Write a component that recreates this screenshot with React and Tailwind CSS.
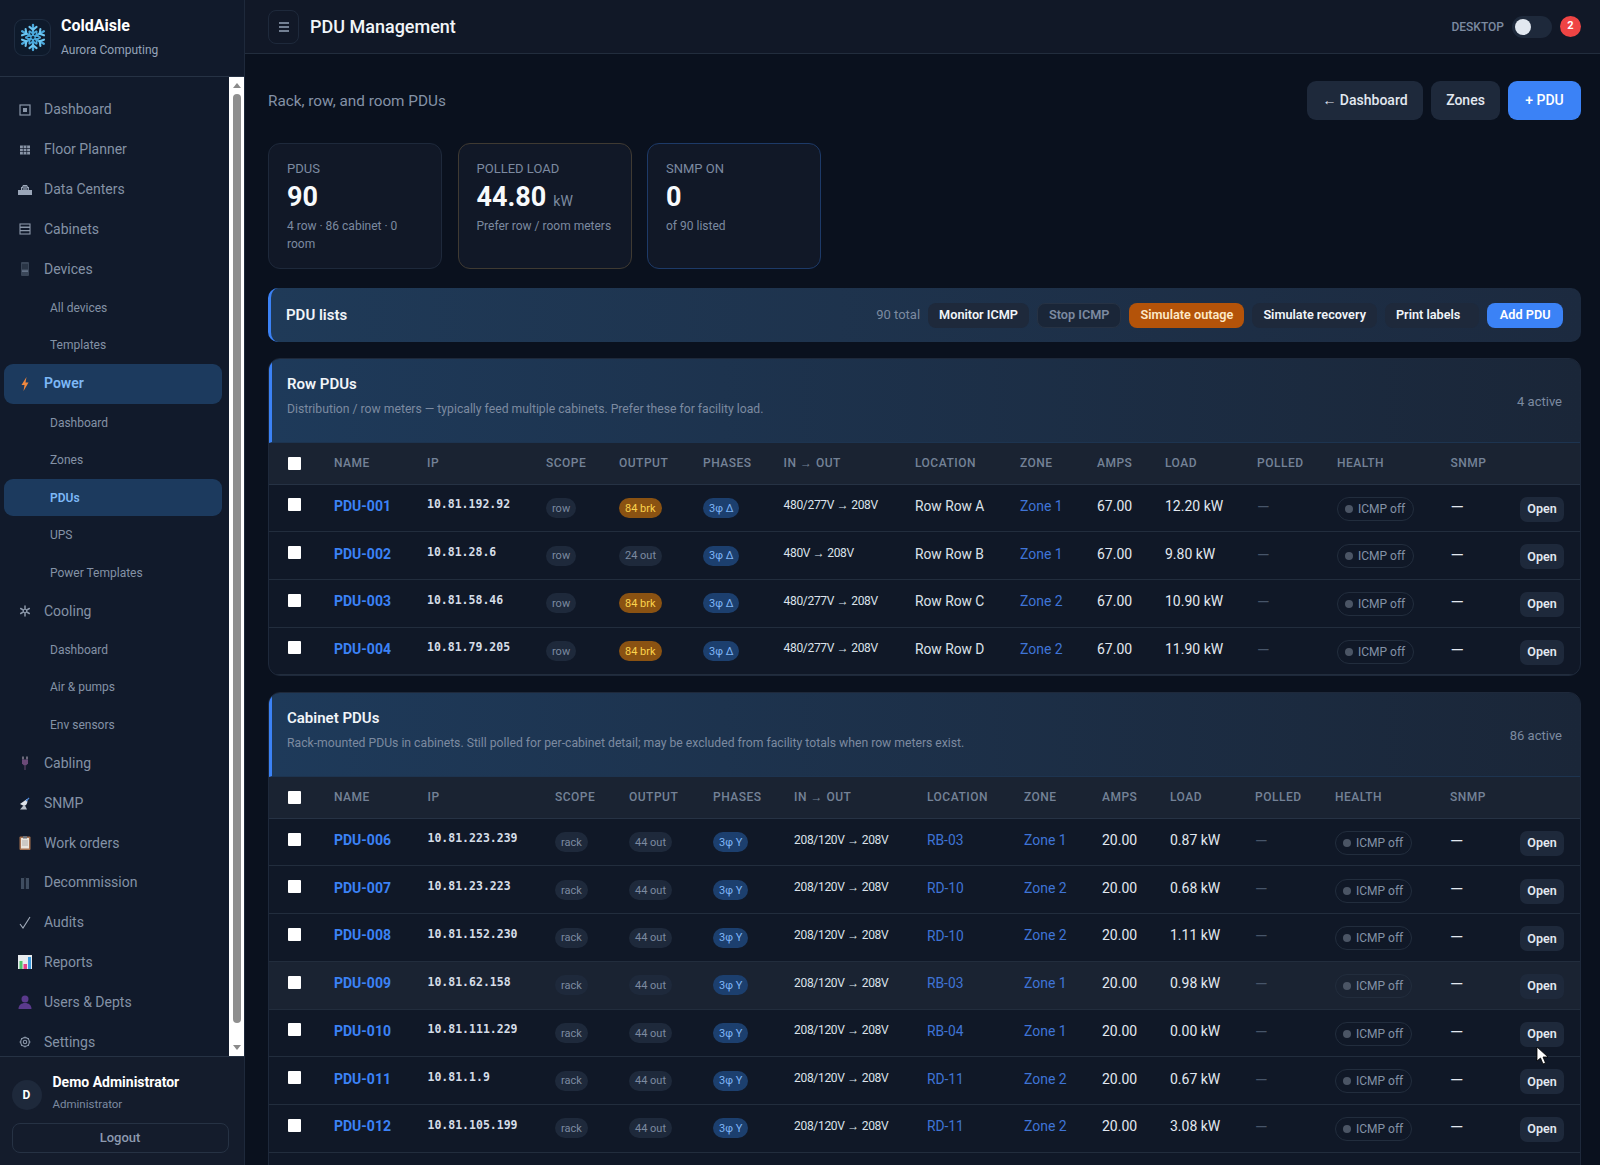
import React from 'react';

const NAV = [
  { label: 'Dashboard', icon: 'dash' },
  { label: 'Floor Planner', icon: 'floor' },
  { label: 'Data Centers', icon: 'dc' },
  { label: 'Cabinets', icon: 'cab' },
  { label: 'Devices', icon: 'dev' },
  { label: 'All devices', sub: true },
  { label: 'Templates', sub: true },
  { label: 'Power', icon: 'power', active: true },
  { label: 'Dashboard', sub: true },
  { label: 'Zones', sub: true },
  { label: 'PDUs', sub: true, active: true },
  { label: 'UPS', sub: true },
  { label: 'Power Templates', sub: true },
  { label: 'Cooling', icon: 'cool' },
  { label: 'Dashboard', sub: true },
  { label: 'Air & pumps', sub: true },
  { label: 'Env sensors', sub: true },
  { label: 'Cabling', icon: 'cabling' },
  { label: 'SNMP', icon: 'snmp' },
  { label: 'Work orders', icon: 'work' },
  { label: 'Decommission', icon: 'decom' },
  { label: 'Audits', icon: 'audit' },
  { label: 'Reports', icon: 'reports' },
  { label: 'Users & Depts', icon: 'users' },
  { label: 'Settings', icon: 'settings' },
];

const HEADERS = ['Name', 'IP', 'Scope', 'Output', 'Phases', 'In → Out', 'Location', 'Zone', 'Amps', 'Load', 'Polled', 'Health', 'SNMP', ''];

const ROW_COLS = ['w-[49px]', 'w-[93px]', 'w-[119px]', 'w-[73px]', 'w-[84px]', 'w-[80.5px]', 'w-[131.5px]', 'w-[105px]', 'w-[77px]', 'w-[68px]', 'w-[92px]', 'w-[80px]', 'w-[113.5px]', 'w-[70px]', 'w-[75.5px]'];
const CAB_COLS = ['w-[49px]', 'w-[93.5px]', 'w-[127.5px]', 'w-[74px]', 'w-[84px]', 'w-[81px]', 'w-[133px]', 'w-[97px]', 'w-[78px]', 'w-[68px]', 'w-[85px]', 'w-[80px]', 'w-[115px]', 'w-[70.5px]', 'w-[75.5px]'];

const ROW_PDUS = [
  { name: 'PDU-001', ip: '10.81.192.92', output: '84 brk', io: '480/277V → 208V', loc: 'Row Row A', zone: 'Zone 1', amps: '67.00', load: '12.20 kW' },
  { name: 'PDU-002', ip: '10.81.28.6', output: '24 out', io: '480V → 208V', loc: 'Row Row B', zone: 'Zone 1', amps: '67.00', load: '9.80 kW' },
  { name: 'PDU-003', ip: '10.81.58.46', output: '84 brk', io: '480/277V → 208V', loc: 'Row Row C', zone: 'Zone 2', amps: '67.00', load: '10.90 kW' },
  { name: 'PDU-004', ip: '10.81.79.205', output: '84 brk', io: '480/277V → 208V', loc: 'Row Row D', zone: 'Zone 2', amps: '67.00', load: '11.90 kW' },
];

const CAB_PDUS = [
  { name: 'PDU-006', ip: '10.81.223.239', loc: 'RB-03', zone: 'Zone 1', load: '0.87 kW' },
  { name: 'PDU-007', ip: '10.81.23.223', loc: 'RD-10', zone: 'Zone 2', load: '0.68 kW' },
  { name: 'PDU-008', ip: '10.81.152.230', loc: 'RD-10', zone: 'Zone 2', load: '1.11 kW' },
  { name: 'PDU-009', ip: '10.81.62.158', loc: 'RB-03', zone: 'Zone 1', load: '0.98 kW', hover: true },
  { name: 'PDU-010', ip: '10.81.111.229', loc: 'RB-04', zone: 'Zone 1', load: '0.00 kW' },
  { name: 'PDU-011', ip: '10.81.1.9', loc: 'RD-11', zone: 'Zone 2', load: '0.67 kW' },
  { name: 'PDU-012', ip: '10.81.105.199', loc: 'RD-11', zone: 'Zone 2', load: '3.08 kW' },
  { name: 'PDU-013', ip: '10.81.44.120', loc: 'RD-12', zone: 'Zone 2', load: '1.42 kW' },
];

// windows-style emoji and glyphs from the nav, redrawn small
const NavIcon = ({ name }) => {
  const c = '#8a96a8';
  switch (name) {
    case 'dash':
      return <svg width="16" height="16" viewBox="0 0 16 16"><rect x="3" y="3" width="10" height="10" fill="none" stroke={c} strokeWidth="1.2" /><rect x="6" y="6" width="4" height="4" fill={c} /></svg>;
    case 'floor':
      return <svg width="16" height="16" viewBox="0 0 16 16"><rect x="3" y="3.5" width="10" height="9" fill={c} /><path d="M3 6.5h10M3 9.5h10M6.3 3.5v9M9.7 3.5v9" stroke="#111a2b" strokeWidth=".7" /></svg>;
    case 'dc':
      return <svg width="16" height="16" viewBox="0 0 16 16"><path d="M1 9h3V6h1l1-2h4l1 2h1v3h3v5H1z" fill="#9aa6b8" /><path d="M7 5v4M9 5v4M5.5 7v2M10.6 7v2" stroke="#111a2b" strokeWidth=".7" /></svg>;
    case 'cab':
      return <svg width="16" height="16" viewBox="0 0 16 16"><rect x="3" y="3" width="10" height="10" fill="none" stroke={c} strokeWidth="1.1" /><path d="M3 6.3h10M3 9.6h10" stroke={c} strokeWidth="1.4" /></svg>;
    case 'dev':
      return <svg width="16" height="16" viewBox="0 0 16 16"><rect x="4" y="1" width="8" height="14" rx="1" fill="#3a4658" /><rect x="5" y="9.5" width="6" height="1.2" fill="#76849a" /><rect x="5" y="3" width="6" height="5" fill="#2a3546" /></svg>;
    case 'power':
      return <svg width="16" height="16" viewBox="0 0 16 16"><path d="M9.5 1 4.5 9h3l-1 6 5-8.500h-3z" fill="#f0883e" /></svg>;
    case 'cool':
      return <svg width="16" height="16" viewBox="0 0 16 16" stroke="#8a96a8" strokeWidth="1.5" strokeLinecap="round" fill="none"><path d="M8 3v3M8 10v3M3.700 5.500l2.500 1.500M9.800 9l2.500 1.500M3.700 10.500l2.500-1.500M9.800 7l2.500-1.500" /><circle cx="8" cy="8" r="1.700" strokeWidth="1.100" /></svg>;
    case 'cabling':
      return <svg width="16" height="16" viewBox="0 0 16 16"><path d="M6 1.500v3M10 1.500v3" stroke="#a89fb0" strokeWidth="1.2" /><path d="M5 4.500h6v4l-2 2H7l-2-2z" fill="#6b4a78" /><path d="M8 10.500V15" stroke="#4a3a58" strokeWidth="1.500" /></svg>;
    case 'snmp':
      return <svg width="16" height="16" viewBox="0 0 16 16"><path d="M3 9l7-5c1 3 0 6-3 7z" fill="#dfe4ea" /><path d="M6 11l-3 3.500h7L8 10.500z" fill="#b9c0ca" /><path d="M9 6l3-3" stroke="#4a86d8" strokeWidth="1.300" /></svg>;
    case 'work':
      return <svg width="16" height="16" viewBox="0 0 16 16"><rect x="2.500" y="1.500" width="11" height="13.500" rx="1" fill="#a5714f" /><rect x="4" y="3" width="8" height="10.500" fill="#e9e4dc" /><rect x="6" y="1" width="4" height="2.500" fill="#6a6f78" /><path d="M5 6h6M5 8h6M5 10h6" stroke="#9a9a9a" strokeWidth=".7" /></svg>;
    case 'decom':
      return <svg width="16" height="16" viewBox="0 0 16 16"><rect x="4" y="3" width="3" height="11" fill="#3f4d60" /><rect x="9" y="3" width="3" height="11" fill="#3f4d60" /><path d="M8 2v12" stroke="#26303f" strokeWidth=".8" /></svg>;
    case 'audit':
      return <svg width="16" height="16" viewBox="0 0 16 16"><path d="M3 9l3 4 7-11" fill="none" stroke="#a3adbc" strokeWidth="1.100" /></svg>;
    case 'reports':
      return <svg width="16" height="16" viewBox="0 0 16 16"><rect x="1" y="1" width="14" height="14" fill="#e8ecef" /><rect x="2.500" y="7" width="3" height="8" fill="#4fc36b" /><rect x="6.500" y="10" width="3.500" height="5" fill="#e83e8c" /><rect x="11" y="3" width="3" height="12" fill="#3d9be0" /></svg>;
    case 'users':
      return <svg width="16" height="16" viewBox="0 0 16 16"><circle cx="8" cy="5" r="3.500" fill="#5a3a8c" /><path d="M1.500 15c0-4 3-6 6.500-6s6.500 2 6.500 6z" fill="#5a3a8c" /></svg>;
    case 'settings':
      return <svg width="16" height="16" viewBox="0 0 16 16" fill="none" stroke={c}><circle cx="8" cy="8" r="1.700" strokeWidth="1.100" /><circle cx="8" cy="8" r="4.300" strokeWidth="1.200" /><path d="M8 2.500v1.500M8 12v1.500M2.500 8H4M12 8h1.500M4 4l1 1M11 11l1 1M4 12l1-1M11 5l1-1" strokeWidth="1" /></svg>;
    default:
      return null;
  }
};

const Snowflake = () => (
  <svg width="26" height="29" viewBox="0 0 27 30" fill="none" stroke="#4aa8dc" strokeLinecap="round">
    {[0, 60, 120, 180, 240, 300].map((a) => (
      <g key={a} transform={`rotate(${a} 13.5 15)`}>
        <path d="M13.500 12 V2" strokeWidth="2.400" />
        <path d="M13.500 7 L9.800 4 M13.500 7 L17.200 4" strokeWidth="2.200" stroke="#6cc6f2" />
        <path d="M13.500 11 L10 8.500 M13.500 11 L17 8.500" strokeWidth="1.700" />
      </g>
    ))}
    <circle cx="13.500" cy="15" r="2.200" fill="#0f2338" strokeWidth="1.300" />
  </svg>
);

const Badge = ({ children, tone }) => {
  const tones = {
    gray: 'bg-[#1e293b] text-[#7c8aa0]',
    amber: 'bg-[#8a5212] text-[#fcd34d]',
    blue: 'bg-[#1c3f6e] text-[#7fb6f7]',
  };
  return (
    <span className={`inline-flex h-[20px] items-center rounded-full px-[6px] align-middle text-[11px] leading-none ${tones[tone]}`}>
      {children}
    </span>
  );
};

const SectionTable = ({ title, desc, count, cols, rows }) => (
  <div className="overflow-hidden rounded-[12px] border border-[#1e293b] bg-[#101827]">
    <div className="flex h-[84px] justify-between border-b border-[#1d3450] border-l-[3px] border-l-[#3b82f6] bg-linear-to-r from-[#1e3a5a] to-[#1a2638] pt-[15px] pr-[18px] pl-[15px]">
      <div>
        <div className="text-[15px] leading-[20px] font-semibold text-[#f1f5f9]">{title}</div>
        <div className="mt-[6px] text-[12.2px] leading-[18px] text-[#7c8aa0]">{desc}</div>
      </div>
      <div className="self-center pb-[13px] text-[13px] text-[#7c8aa0]">{count}</div>
    </div>
    <table className="w-full table-fixed border-collapse">
      <colgroup>
        {cols.map((c, i) => <col key={i} className={c} />)}
      </colgroup>
      <thead>
        <tr className="h-[41px] border-b border-[#263244] bg-[#1a2332]">
          <th className="pl-[19px] text-left align-middle"><input type="checkbox" className="block h-[13px] w-[13px] appearance-none rounded-[1px] bg-white" /></th>
          {HEADERS.map((h) => (
            <th key={h || 'open'} className="pb-[1px] pl-[16px] text-left text-[12px] font-medium tracking-[0.5px] text-[#748297] uppercase">{h}</th>
          ))}
        </tr>
      </thead>
      <tbody>
        {rows.map((r) => (
          <tr key={r.name} className={`h-[47.7px] border-b border-[#222d3d] ${r.hover ? 'bg-[#1a2332]' : ''}`}>
            <td className="pl-[19px] align-middle"><input type="checkbox" className="-mt-[6px] block h-[13px] w-[13px] appearance-none rounded-[1px] bg-white" /></td>
            <td className="pb-[3px] pl-[16px] text-[14px] font-bold text-[#3b82f6]">{r.name}</td>
            <td className="pb-[6px] pl-[16px] font-['DejaVu_Sans_Mono',monospace] text-[11.5px] font-bold text-[#d5dde7]">{r.ip}</td>
            <td className="pb-[1px] pl-[16px]"><Badge tone="gray">{r.scope}</Badge></td>
            <td className="pb-[1px] pl-[16px]"><Badge tone={r.output === '84 brk' ? 'amber' : 'gray'}>{r.output}</Badge></td>
            <td className="pb-[1px] pl-[16px]"><Badge tone="blue">{r.phases}</Badge></td>
            <td className="pb-[5px] pl-[16px] text-[12px] tracking-[-0.3px] text-[#dbe2ea]">{r.io}</td>
            <td className={`pb-[3px] pl-[16px] text-[13.8px] ${r.link ? 'text-[#3f74d6]' : 'text-[#dbe2ea]'}`}>{r.loc}</td>
            <td className="pb-[3px] pl-[16px] text-[14px] text-[#3f74d6]">{r.zone}</td>
            <td className="pb-[3px] pl-[16px] text-[14px] text-[#e2e8f0]">{r.amps}</td>
            <td className="pb-[3px] pl-[16px] text-[14px] text-[#e2e8f0]">{r.load}</td>
            <td className="pl-[16px] text-[16px] text-[#475569]">—</td>
            <td className="pt-[1px] pl-[16px]">
              <span className="inline-flex h-[24px] w-[77px] items-center gap-[5px] rounded-full border border-[#222d3d] pl-[7px] align-middle text-[12px] text-[#8492a6]">
                <span className="h-[8px] w-[8px] rounded-full bg-[#4b5565]" />
                ICMP off
              </span>
            </td>
            <td className="pl-[16px] text-[17px] text-[#e2e8f0]">—</td>
            <td className="pt-[2px] pr-[16px] text-right">
              <button className="h-[25px] w-[44px] rounded-[7px] bg-[#1e293b] text-[12.5px] font-semibold text-[#e2e8f0]">Open</button>
            </td>
          </tr>
        ))}
      </tbody>
    </table>
  </div>
);

const StatCard = ({ label, value, unit, desc, border }) => (
  <div className={`h-[126px] w-[174px] rounded-[12px] border bg-[#111827] pt-[16px] pr-[16px] pl-[18px] ${border}`}>
    <div className="text-[13px] leading-[18px] text-[#7c8aa0] uppercase">{label}</div>
    <div className="mt-[3px] flex h-[32px] items-center gap-[7px] text-[27px] leading-none font-bold text-[#f8fafc]">
      {value}
      {unit && <span className="mt-[8px] text-[14px] font-normal text-[#7c8aa0]">{unit}</span>}
    </div>
    <div className="mt-[4px] text-[12px] leading-[18px] text-[#7c8aa0]">{desc}</div>
  </div>
);

const BarButton = ({ children, className }) => (
  <button className={`h-[25px] rounded-[8px] text-[12.7px] font-semibold whitespace-nowrap ${className}`}>{children}</button>
);

export default function App() {
  const rowRows = ROW_PDUS.map((r) => ({ ...r, scope: 'row', phases: '3φ Δ' }));
  const cabRows = CAB_PDUS.map((r) => ({ ...r, scope: 'rack', output: '44 out', phases: '3φ Y', io: '208/120V → 208V', amps: '20.00', link: true }));

  return (
    <div className="flex h-screen overflow-hidden bg-[#0a111e] font-['Roboto',sans-serif] text-[#e2e8f0]">
      {/* sidebar */}
      <aside className="flex h-full w-[245px] shrink-0 flex-col border-r border-[#1e293b] bg-[#111a2b]">
        <div className="flex h-[77px] shrink-0 items-center gap-[10px] border-b border-[#263244] pb-[1px] pl-[14px]">
          <div className="flex h-[37px] w-[37px] items-center justify-center rounded-[9px] border border-[#1e2c40] bg-[#0e1a2b]">
            <Snowflake />
          </div>
          <div>
            <div className="text-[16px] leading-[20px] font-bold text-white">ColdAisle</div>
            <div className="mt-[5px] text-[12px] leading-[18px] text-[#94a3b8]">Aurora Computing</div>
          </div>
        </div>

        <div className="flex min-h-0 flex-1">
          <nav className="min-w-0 flex-1 overflow-hidden pt-[13px]">
            {NAV.map((item, i) => (
              <div
                key={i}
                className={`ml-[4px] flex w-[218px] items-center rounded-[9px] ${item.sub ? 'h-[37.5px] pl-[46px] text-[12px]' : 'h-[39.8px] gap-[11px] pl-[13px] text-[14px]'} ${item.active ? 'bg-[#1c3a5e] font-semibold text-[#7db8f7]' : 'text-[#8492a6]'}`}
              >
                {item.icon && <NavIcon name={item.icon} />}
                {item.label}
              </div>
            ))}
          </nav>
          <div className="flex w-[15px] shrink-0 flex-col items-center bg-white">
            <div className="mt-[6px] h-0 w-0 border-x-[4px] border-b-[5px] border-x-transparent border-b-[#8a8a8a]" />
            <div className="mt-[6px] w-[8px] flex-1 rounded-full bg-[#8f8f8f]" />
            <div className="mt-[22px] mb-[6px] h-0 w-0 border-x-[4px] border-t-[5px] border-x-transparent border-t-[#8a8a8a]" />
          </div>
        </div>

        <div className="h-[109px] shrink-0 border-t border-[#263244] bg-[#141c2c] px-[11.5px] pt-[21px]">
          <div className="flex items-center gap-[11px]">
            <div className="flex h-[30px] w-[30px] items-center justify-center rounded-full bg-[#1e293b] text-[12px] font-bold text-white">D</div>
            <div>
              <div className="-mt-[5px] text-[14px] leading-[18px] font-bold text-white">Demo Administrator</div>
              <div className="mt-[5px] text-[11.5px] leading-[16px] text-[#7c8aa0]">Administrator</div>
            </div>
          </div>
          <button className="mt-[11px] h-[30px] w-[217px] rounded-[8px] border border-[#263244] text-[13px] font-medium text-[#8d9ab0]">Logout</button>
        </div>
      </aside>

      {/* main */}
      <div className="relative flex min-w-0 flex-1 flex-col">
        <header className="flex h-[54px] shrink-0 items-center justify-between border-b border-[#222d3d] bg-[#111827] pr-[19px] pl-[23px]">
          <div className="flex items-center gap-[11px]">
            <button className="flex h-[34px] w-[31px] items-center justify-center rounded-[8px] border border-[#1e293b]">
              <svg width="12" height="12" viewBox="0 0 12 12" stroke="#94a3b8" strokeWidth="1.500"><path d="M1 2h10M1 6h10M1 10h10" /></svg>
            </button>
            <div className="text-[18px] font-medium text-[#f1f5f9]">PDU Management</div>
          </div>
          <div className="flex items-center gap-[8px]">
            <span className="text-[12px] font-medium text-[#7c8aa0]">DESKTOP</span>
            <div className="flex h-[22px] w-[40px] items-center rounded-full bg-[#1e293b] pl-[3px]">
              <div className="h-[16px] w-[16px] rounded-full bg-[#e2e8f0]" />
            </div>
            <div className="flex h-[21px] w-[21px] items-center justify-center rounded-full bg-[#ef4444] text-[11px] font-bold text-white">2</div>
          </div>
        </header>

        <main className="min-h-0 flex-1 overflow-hidden pt-[27px] pr-[19px] pl-[23px]">
          <div className="flex h-[39px] items-center justify-between">
            <div className="pt-[1px] text-[15.3px] text-[#8492a6]">Rack, row, and room PDUs</div>
            <div className="flex gap-[8px]">
              <button className="h-[39px] w-[116px] rounded-[9px] bg-[#1e293b] text-[14px] font-medium text-[#e2e8f0]">← Dashboard</button>
              <button className="h-[39px] w-[69px] rounded-[9px] bg-[#1e293b] text-[14px] font-medium text-[#e2e8f0]">Zones</button>
              <button className="h-[39px] w-[73px] rounded-[9px] bg-[#3b82f6] text-[14px] font-medium text-white">+ PDU</button>
            </div>
          </div>

          <div className="mt-[23px] flex gap-[15.500px]">
            <StatCard label="PDUs" value="90" desc="4 row · 86 cabinet · 0 room" border="border-[#1e293b]" />
            <StatCard label="Polled load" value="44.80" unit="kW" desc="Prefer row / room meters" border="border-[#3f3a32]" />
            <StatCard label="SNMP on" value="0" desc="of 90 listed" border="border-[#1d3a68]" />
          </div>

          <div className="mt-[19px] flex h-[54px] items-center justify-between rounded-[10px] border-l-[3px] border-l-[#3b82f6] bg-linear-to-r from-[#1f3a58] to-[#1c2a3f] pr-[18px] pl-[15px]">
            <div className="text-[15px] font-semibold text-[#f1f5f9]">PDU lists</div>
            <div className="flex items-center gap-[8px]">
              <span className="text-[13px] text-[#7c8aa0]">90 total</span>
              <BarButton className="bg-[#1e293b] px-[11px] text-[#f1f5f9]">Monitor ICMP</BarButton>
              <BarButton className="border border-[#263244] bg-[#1a2638] px-[11px] text-[#7c8aa0]">Stop ICMP</BarButton>
              <BarButton className="bg-[#b45309] px-[11px] text-[#fde9c8]">Simulate outage</BarButton>
              <BarButton className="bg-[#1e293b] px-[11px] text-[#f1f5f9]">Simulate recovery</BarButton>
              <BarButton className="bg-[#1e293b] pr-[19px] pl-[11px] text-[#f1f5f9]">Print labels</BarButton>
              <BarButton className="bg-[#3b82f6] px-[12.5px] text-white">Add PDU</BarButton>
            </div>
          </div>

          <div className="mt-[16px] flex flex-col gap-[16px]">
            <SectionTable
              title="Row PDUs"
              desc="Distribution / row meters — typically feed multiple cabinets. Prefer these for facility load."
              count="4 active"
              cols={ROW_COLS}
              rows={rowRows}
            />
            <SectionTable
              title="Cabinet PDUs"
              desc="Rack-mounted PDUs in cabinets. Still polled for per-cabinet detail; may be excluded from facility totals when row meters exist."
              count="86 active"
              cols={CAB_COLS}
              rows={cabRows}
            />
          </div>
        </main>

        {/* mouse pointer caught in the shot */}
        <svg className="absolute top-[1046px] left-[1291px]" width="13" height="19" viewBox="0 0 13 19">
          <path d="M1 1v14l3.500-3 2.500 6 2.500-1-2.500-6H12z" fill="#fff" stroke="#000" strokeWidth=".8" />
        </svg>
      </div>
    </div>
  );
}
